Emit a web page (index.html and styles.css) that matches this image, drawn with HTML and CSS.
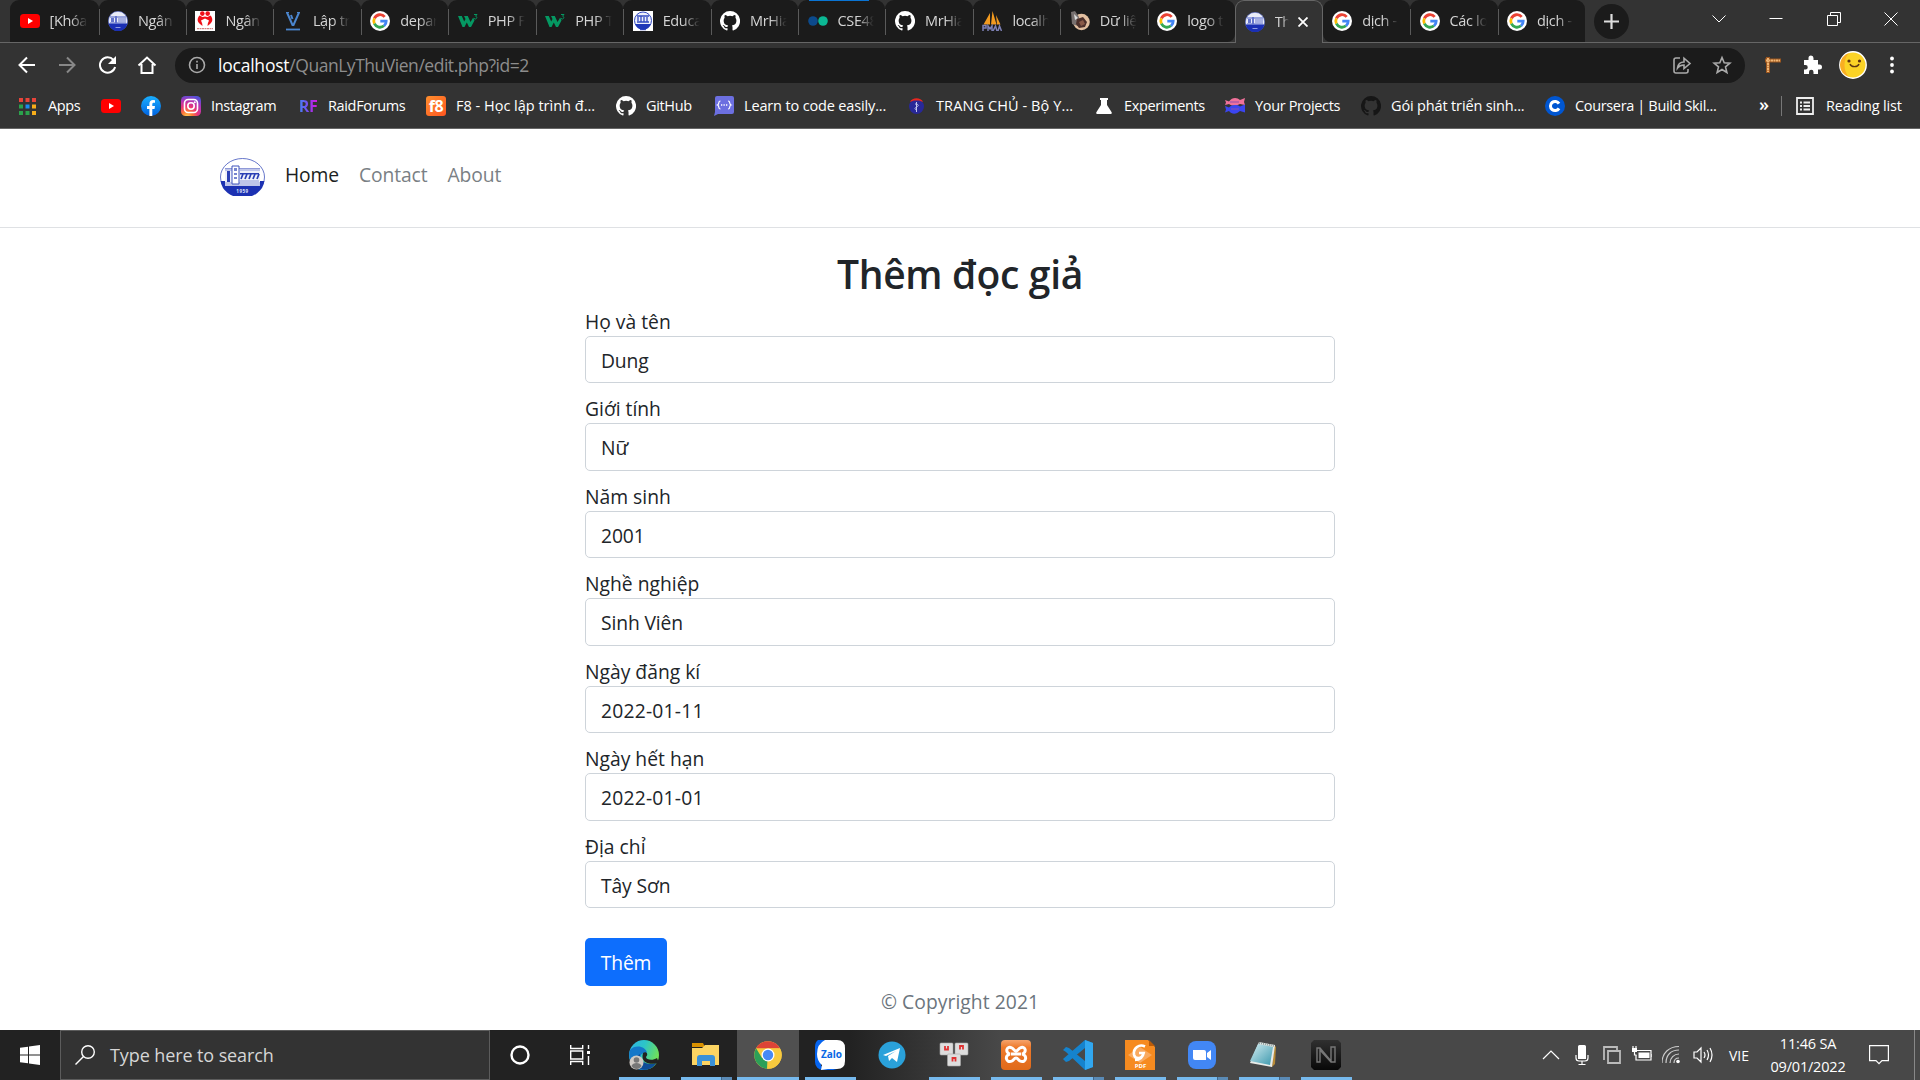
FILE: index.html
```html
<!DOCTYPE html>
<html lang="vi">
<head>
<meta charset="utf-8">
<title>Thêm đọc giả</title>
<link rel="stylesheet" href="styles.css">
</head>
<body>
<svg class="sprite" aria-hidden="true">
  <defs>
    <linearGradient id="fbG" x1="0" y1="0" x2="0" y2="1"><stop offset="0" stop-color="#19afff"/><stop offset="1" stop-color="#0062e0"/></linearGradient>
    <radialGradient id="igG" cx=".3" cy="1.05" r="1.1"><stop offset="0" stop-color="#ffd65a"/><stop offset=".25" stop-color="#fd7a35"/><stop offset=".5" stop-color="#e8357a"/><stop offset=".75" stop-color="#b535b5"/><stop offset="1" stop-color="#5551d8"/></radialGradient>
    <linearGradient id="edgeG" x1="0" y1="0" x2="1" y2=".4"><stop offset="0" stop-color="#2fb2e6"/><stop offset=".5" stop-color="#2cc5c8"/><stop offset="1" stop-color="#6fe05a"/></linearGradient>
    <linearGradient id="npG" x1="0" y1="0" x2="1" y2="1"><stop offset="0" stop-color="#d4eef2"/><stop offset="1" stop-color="#3c98ad"/></linearGradient>
    <linearGradient id="xpG" x1="0" y1="0" x2="0" y2="1"><stop offset="0" stop-color="#f6a46c"/><stop offset=".25" stop-color="#ee7a2b"/><stop offset="1" stop-color="#e06a1a"/></linearGradient>
    <linearGradient id="nG" x1="0" y1="0" x2="0" y2="1"><stop offset="0" stop-color="#303030"/><stop offset="1" stop-color="#080808"/></linearGradient>
  </defs>
  <symbol id="youtube" viewBox="0 0 20 20"><rect y="3" width="20" height="14" rx="3.5" fill="#f00"/><path d="M8 7v6l5-3z" fill="#fff"/></symbol>
  <symbol id="tlu" viewBox="0 0 20 20"><circle cx="10" cy="10" r="9.700" fill="#e9ecf8" stroke="#4b5fc4" stroke-width=".6"/><path d="M.5 12.500h19A9.700 9.700 0 0 1 .5 12.500z" fill="#1a2fb4"/><path d="M2 6h16M2 12h16" stroke="#4b5fc4"/><path d="M3 7h3v4H3zM7 5h2v7H7z" fill="#6474cc"/><path d="M10 8h8M10 10h8" stroke="#6474cc"/><path d="M7.500 16.500h5" stroke="#8f9ae0"/></symbol>
  <symbol id="tlusq" viewBox="0 0 20 20"><path fill="#fff" d="M0 0h20v20H0z"/><circle cx="10" cy="9.500" r="8.500" fill="#eef0fb" stroke="#3048c0"/><path d="M2 13h16a8.500 8.500 0 0 1-16 0z" fill="#2038b8"/><path d="M4 5h12M4 11h12M5 6v4M8 5v6M11 6v5M14 6v5" stroke="#3048c0" stroke-width="1.300"/><path d="M7 18.700h6" stroke="#2038b8"/></symbol>
  <symbol id="blood" viewBox="0 0 20 20"><path fill="#fff" d="M0 0h20v20H0z"/><path d="M4.500 4.500L7.500 6 10 5.500l2.500.5 3-1.500c2.500 3 2.500 6-.5 8.500l-2.500 2 .3-2.500L14 9.500l-4-2-4 2 1.200 3 .3 2.500L5 13C2 10.500 2 7.500 4.500 4.500z" fill="#f00f17"/><circle cx="7.300" cy="2.600" r="2.300" fill="#f00f17"/><circle cx="12.700" cy="2.600" r="2.300" fill="#f00f17"/><path d="M2 17.700h16" stroke="#c66" stroke-dasharray="2 .5"/></symbol>
  <symbol id="vlogo" viewBox="0 0 20 20"><path d="M4 1.500L9.500 14h1L16 1.500M8 4l1.500 4" fill="none" stroke="#4b86cf" stroke-width="2"/><path d="M3 18.500h14" stroke="#4b86cf" stroke-width="1.800"/><path d="M3 1.500h3M14 1.500h3" stroke="#4b86cf"/></symbol>
  <symbol id="google" viewBox="0 0 20 20"><circle cx="10" cy="10" r="10" fill="#fff"/><g fill="none" stroke-width="2.800"><path d="M14.700 5.800A6.200 6.200 0 0 0 4.400 7.300" stroke="#ea4335"/><path d="M4.400 7.300a6.200 6.200 0 0 0 0 5.400" stroke="#fbbc05"/><path d="M4.400 12.700a6.200 6.200 0 0 0 9.600 2.100" stroke="#34a853"/><path d="M14 14.800c1.600-1.300 2.300-2.800 2.200-4.600H10.300" stroke="#4285f4"/></g></symbol>
  <symbol id="w3" viewBox="0 0 20 20"><path d="M0 5h3.800l2.400 5.500L7.500 8 6 5h3.800l2.700 6 2.700-4.500 1.300 3L13 16h-2L8.800 11.500 6.500 16h-2z" fill="#059862"/><path d="M16 3.500h3l-1.500 1.700c2 .2 1.500 2.800-.2 2.800l-1.300-.5" stroke="#059862" fill="none"/></symbol>
  <symbol id="github" viewBox="0 0 16 16"><path d="M8 0a8 8 0 0 0-2.530 15.590c.4.070.55-.17.55-.38v-1.490c-2.010.37-2.530-.49-2.690-.94-.09-.23-.48-.94-.82-1.130-.28-.15-.68-.52-.01-.53.63-.01 1.080.58 1.230.82.72 1.210 1.870.87 2.330.66.070-.52.280-.87.510-1.070-1.780-.2-3.640-.89-3.640-3.950 0-.87.310-1.590.82-2.150-.08-.2-.36-1.020.08-2.120 0 0 .67-.21 2.200.82a7.600 7.600 0 0 1 4 0c1.530-1.040 2.200-.82 2.200-.82.44 1.100.16 1.920.08 2.120.51.56.82 1.270.82 2.150 0 3.070-1.870 3.750-3.650 3.950.29.25.54.73.54 1.480v2.200c0 .21.15.46.55.38A8 8 0 0 0 8 0z" fill="currentColor"/></symbol>
  <symbol id="dots" viewBox="0 0 20 20"><circle cx="5" cy="10" r="4.800" fill="#0c4a8c"/><circle cx="15" cy="10" r="4.800" fill="#0bb894"/></symbol>
  <symbol id="pma" viewBox="0 0 20 20"><path d="M1.500 13.500L8 2v11.500zM9 13.500L10.500 0l4 13.500zM15 13.500L14 4l4.500 9.500z" fill="#f29a1f"/><path d="M1 20v-5.500h3V17H1M6 20v-5l2 3 2-3v5M11 20l2.500-5 1.500 5M16 20l1.500-5 2 5" fill="none" stroke="#7d80b5" stroke-width="1.500"/></symbol>
  <symbol id="photo" viewBox="0 0 20 20"><circle cx="11.500" cy="11" r="8.300" fill="#e2bfa0"/><path d="M1 1l4-1 4 6-1 9-6-2z" fill="#77706f"/><path d="M4 3l4 4-3 2z" fill="#ddd"/><path d="M7 8l6-2 4 5-2 5-6 1-3-4z" fill="#4c302b"/><path d="M9 11l4-2 2 4-4 2z" fill="#8a5a48"/></symbol>
  <symbol id="facebook" viewBox="0 0 20 20"><circle cx="10" cy="10" r="10" fill="url(#fbG)"/><path d="M8.400 20v-7H6v-3h2.400V7.800c0-2.500 1.400-3.800 3.600-3.800l2 .2v2.500h-1.200c-1.200 0-1.500.7-1.500 1.500V10H14l-.5 3h-2.200v7z" fill="#fff"/></symbol>
  <symbol id="instagram" viewBox="0 0 20 20"><rect width="20" height="20" rx="4.500" fill="url(#igG)"/><g fill="none" stroke="#fff" stroke-width="1.600"><rect x="3.500" y="3.500" width="13" height="13" rx="3.700"/><circle cx="10" cy="10" r="3.200"/></g><circle cx="13.800" cy="6.200" r="1" fill="#fff"/></symbol>
  <symbol id="learn" viewBox="0 0 20 20"><path d="M3 0h15a2 2 0 0 1 2 2v14a2 2 0 0 1-2 2H4l-4 2 1-4V2a2 2 0 0 1 2-2z" fill="#6c6fe0"/><path d="M6.500 5C3.500 5 6 8 3.500 9 6 10 3.500 13 6.500 13M14 5c3 0 .5 3 3 4-2.500 1 0 4-3 4" fill="none" stroke="#fff" stroke-width="1.200"/><path d="M7 9h1.300m1.200 0h1.300m1.200 0h1.300" stroke="#fff" stroke-width="1.300"/></symbol>
  <symbol id="health" viewBox="0 0 20 20"><circle cx="8.500" cy="10.500" r="7.500" fill="#282898"/><path d="M2 6c2-5 11-5 13 0l-4-1.500H6z" fill="#e82720"/><path d="M8.500 6v10M7 8c4 0 4 2 1.500 3S7 14 9 14" stroke="#c2c5ee" fill="none"/></symbol>
  <symbol id="flask" viewBox="0 0 20 20"><path d="M4 2h8v2h-1v5l4.500 7c.7 1.300 0 2-1 2h-13c-1 0-1.700-.7-1-2L5 9V4H4z" fill="#fff"/></symbol>
  <symbol id="fish" viewBox="0 0 20 20"><path d="M0 4l4 1.500C7 1 12 1 15 4l5-2-1 4 1 3-5-1c-4 2-8 2-11 0L0 9l1-2.500z" fill="#f0719a"/><path d="M0 10l4 1.500C7 8.500 12 8.500 15 10.500l5-2v8L15 15c-3 3-8 4-11 0l-4 1.500 1-3z" fill="#3b45f0"/><path d="M5 6h9M6 13h8" stroke="#8f4fae" stroke-width="1.200"/></symbol>
  <symbol id="coursera" viewBox="0 0 20 20"><circle cx="10" cy="10" r="10" fill="#0056d2"/><path d="M14 7.600a4.600 4.600 0 1 0 0 4.800" fill="none" stroke="#fff" stroke-width="3"/></symbol>
  <symbol id="apps" viewBox="0 0 17 17"><path fill="#e8443a" d="M0 0h4v4H0zM6.500 0h4v4h-4zM13 0h4v4h-4z"/><path fill="#2ba24c" d="M0 6.500h4v4H0zM0 13h4v4H0zM6.500 13h4v4h-4z"/><path fill="#1a8cf0" d="M6.500 6.500h4v4h-4z"/><path fill="#f7ad1a" d="M13 6.500h4v4h-4zM13 13h4v4h-4z"/></symbol>
</svg>

<header class="browser">
  <div class="tabstrip">
    <div class="tab first"><svg class="fav"><use href="#youtube"/></svg><span>[Khóa</span></div>
    <div class="tab"><svg class="fav"><use href="#tlu"/></svg><span>Ngân</span></div>
    <div class="tab"><svg class="fav"><use href="#blood"/></svg><span>Ngân</span></div>
    <div class="tab"><svg class="fav"><use href="#vlogo"/></svg><span>Lập trì</span></div>
    <div class="tab"><svg class="fav"><use href="#google"/></svg><span>depar</span></div>
    <div class="tab"><svg class="fav"><use href="#w3"/></svg><span>PHP F</span></div>
    <div class="tab"><svg class="fav"><use href="#w3"/></svg><span>PHP T</span></div>
    <div class="tab"><svg class="fav"><use href="#tlusq"/></svg><span>Educa</span></div>
    <div class="tab"><svg class="fav"><use href="#github"/></svg><span>MrHia</span></div>
    <div class="tab loading"><svg class="fav"><use href="#dots"/></svg><span>CSE48</span></div>
    <div class="tab"><svg class="fav"><use href="#github"/></svg><span>MrHia</span></div>
    <div class="tab"><svg class="fav"><use href="#pma"/></svg><span>localh</span></div>
    <div class="tab"><svg class="fav"><use href="#photo"/></svg><span>Dữ liệ</span></div>
    <div class="tab before-active"><svg class="fav"><use href="#google"/></svg><span>logo t</span></div>
    <div class="tab active"><svg class="fav"><use href="#tlu"/></svg><span>Th</span><svg class="close" viewBox="0 0 10 10"><path d="M.5.5l9 9M9.500.5l-9 9"/></svg></div>
    <div class="tab after-active"><svg class="fav"><use href="#google"/></svg><span>dịch -</span></div>
    <div class="tab"><svg class="fav"><use href="#google"/></svg><span>Các lo</span></div>
    <div class="tab last"><svg class="fav"><use href="#google"/></svg><span>dịch -</span></div>
    <div class="newtab"><svg viewBox="0 0 15 15"><path d="M7.500 0v15M0 7.500h15"/></svg></div>
    <div class="winbtns">
      <svg viewBox="0 0 14 14"><path d="M.5 3.500L7 10l6.500-6.500"/></svg>
      <svg viewBox="0 0 14 14"><path d="M.5 6.500h13"/></svg>
      <svg viewBox="0 0 14 14"><path d="M.5 3.500h10v10H.5zM3.500 3V.5h10v10H11"/></svg>
      <svg viewBox="0 0 14 14"><path d="M.5.5l13 13M13.500.5l-13 13"/></svg>
    </div>
  </div>

  <div class="toolbar">
    <div class="navicons">
      <svg viewBox="0 0 20 20"><path d="M18 10H3M10 2.500L2.500 10l7.500 7.500"/></svg>
      <svg class="dim" viewBox="0 0 20 20"><path d="M2 10h15M10 2.500l7.500 7.500-7.500 7.500"/></svg>
      <svg viewBox="0 0 20 20"><path d="M16.500 5a7.700 7.700 0 1 0 1.600 7"/><path class="solid" d="M19 1v8h-8z"/></svg>
      <svg viewBox="0 0 20 20"><path d="M1.500 10.500L10 2.500l8.500 8M4.500 9v9h11V9"/></svg>
    </div>
    <div class="omnibox">
      <svg class="info" viewBox="0 0 18 18"><circle cx="9" cy="9" r="7.500"/><path d="M9 8v5M9 4.800v1.700"/></svg>
      <span class="url"><b>localhost</b>/QuanLyThuVien/edit.php?id=2</span>
      <svg class="share" viewBox="0 0 20 20"><path d="M8 3H4a2 2 0 0 0-2 2v11a2 2 0 0 0 2 2h10a2 2 0 0 0 2-2v-2"/><path d="M5.500 13c.5-4 3-6 6.500-6V3.200L18 8.500 12 13.500V10c-3 0-5 1-6.500 3z"/></svg>
      <svg class="star" viewBox="0 0 20 20"><path d="M10 2.500l2.200 5.300 5.700.4-4.400 3.700 1.400 5.600-4.900-3-4.900 3 1.400-5.600-4.400-3.700 5.700-.4z"/></svg>
    </div>
    <div class="exts">
      <svg viewBox="0 0 18 18"><path d="M4 1v16M1 4.500h16" stroke="#9c561e" stroke-width="4"/><path d="M4 2v14M2 4.500h14" stroke="#f0b574" stroke-width="2" stroke-dasharray="2 .5"/></svg>
      <svg viewBox="0 0 20 20"><path d="M2 5h4.500V3a2.500 2.500 0 0 1 5 0v2H16v4.500h1.500a2.500 2.500 0 0 1 0 5H16V19h-4.500v-2a2 2 0 0 0-4.500 0v2H2v-4.500h1.500a2.200 2.200 0 0 0 0-4.500H2z" fill="#fff"/></svg>
      <svg class="avatar" viewBox="0 0 28 28"><circle cx="14" cy="14" r="13.200" fill="#fbd326" stroke="#fff" stroke-width="1.400"/><path d="M10 2a12.500 12.500 0 0 0 0 24C4 20 4 8 10 2z" fill="#f9ae22"/><path d="M11 13c1 3.500 8 3.500 9 0" fill="none" stroke="#5b3511" stroke-width="1.400"/><circle cx="10" cy="10" r="1.600" fill="#5b2f10"/><circle cx="20.500" cy="10" r="1.600" fill="#5b2f10"/></svg>
      <svg class="menu" viewBox="0 0 4 18"><circle cx="2" cy="2.500" r="1.900"/><circle cx="2" cy="9" r="1.900"/><circle cx="2" cy="15.500" r="1.900"/></svg>
    </div>
  </div>

  <nav class="bookmarks">
    <a class="apps"><svg><use href="#apps"/></svg>Apps</a>
    <a><svg><use href="#youtube"/></svg></a>
    <a><svg><use href="#facebook"/></svg></a>
    <a><svg><use href="#instagram"/></svg>Instagram</a>
    <a><i class="rf">RF</i>RaidForums</a>
    <a class="wide"><i class="f8">f8</i>F8 - Học lập trình đ...</a>
    <a><svg><use href="#github"/></svg>GitHub</a>
    <a class="medium"><svg><use href="#learn"/></svg>Learn to code easily...</a>
    <a class="caps"><svg><use href="#health"/></svg>TRANG CHỦ - Bộ Y...</a>
    <a class="lab"><svg><use href="#flask"/></svg>Experiments</a>
    <a><svg><use href="#fish"/></svg>Your Projects</a>
    <a class="medium"><svg class="dark"><use href="#github"/></svg>Gói phát triển sinh...</a>
    <a><svg><use href="#coursera"/></svg>Coursera | Build Skil...</a>
    <a class="more">»</a>
    <a class="reading medium"><svg viewBox="0 0 18 18"><path d="M1 1h16v16H1zM4 5.500h2M4 9h2M4 12.500h2M7.500 5.500H14M7.500 9H14M7.500 12.500H14" fill="none" stroke="#eee" stroke-width="1.800"/></svg>Reading list</a>
  </nav>
</header>

<main class="page">
  <nav class="navbar">
    <svg class="logo" viewBox="0 0 45 38"><ellipse cx="22.500" cy="19" rx="22" ry="18.500" fill="#fff" stroke="#4054bd" stroke-width=".8"/><path d="M.6 23h43.800A22 18.500 0 0 1 .6 23z" fill="#1c31b2"/><path d="M5 10h35v18H5z" fill="#eef0fa"/><path d="M5 10.500h35M5 12h8M20 12h20M5 25h35M5 27h35M20 23h19" stroke="#7784cf" stroke-width=".8"/><path d="M7 13h3v11H7z" fill="#2b3fb5"/><path d="M12 8h7v18h-7z" fill="#fff" stroke="#4054bd"/><path d="M14 10h3v3h-3zM14 15h3v2h-3zM14 19h3v2h-3z" fill="#7784cf"/><path d="M20 15h19v1.500H20z" fill="#2b3fb5"/><path d="M23 16l-2 5M27 16l-2 5M31 16l-2 5M35 16l-2 5M39 16l-2 5" stroke="#2b3fb5" stroke-width="1.700"/><text x="22.500" y="35" text-anchor="middle">1959</text></svg>
    <a class="current">Home</a><a>Contact</a><a>About</a>
  </nav>
  <form class="form">
    <h2>Thêm đọc giả</h2>
    <div class="group"><label>Họ và tên</label><div class="control">Dung</div></div>
    <div class="group"><label>Giới tính</label><div class="control">Nữ</div></div>
    <div class="group"><label>Năm sinh</label><div class="control">2001</div></div>
    <div class="group"><label>Nghề nghiệp</label><div class="control">Sinh Viên</div></div>
    <div class="group"><label>Ngày đăng kí</label><div class="control date">2022-01-11</div></div>
    <div class="group"><label>Ngày hết hạn</label><div class="control date">2022-01-01</div></div>
    <div class="group"><label>Địa chỉ</label><div class="control">Tây Sơn</div></div>
    <button type="button" class="btn">Thêm</button>
  </form>
  <p class="copyright">© Copyright 2021</p>
</main>

<footer class="taskbar">
  <div class="start"><svg viewBox="0 0 20 20"><path d="M0 2.800l8-1.100v7.800H0zM9 1.500L20 0v9.500H9zM0 10.500h8v7.800l-8-1.100zM9 10.500h11V20L9 18.500z" fill="#fff"/></svg></div>
  <div class="search"><svg viewBox="0 0 20 20"><circle cx="13" cy="7" r="6.300"/><path d="M8.500 11.500L.5 19.500"/></svg><span>Type here to search</span></div>
  <div class="cortana"><svg viewBox="0 0 20 20"><circle cx="10" cy="10" r="8.500"/></svg></div>
  <div class="taskview"><svg viewBox="0 0 20 20"><path d="M.7 0v3.500h12V0M.7 20v-3.500h12V20M.7 6h12v8H.7zM18.500 0v4M18.500 11v9"/><path d="M17 6h3v3h-3z" fill="#fff" stroke="none"/></svg></div>
  <div class="dock">
    <div class="app"><svg viewBox="0 0 30 30"><circle cx="15" cy="15" r="15" fill="url(#edgeG)"/><path d="M1 10c5-6 16-4 17 3-5-1-8 3-6 7s8 6 15 3c-4 7-14 9-20 5S-1 16 1 10z" fill="#1477c9"/><path d="M11 14c-1 7 7 12 16 9-4 7-13 9-18 4-4-4-2-11 2-13z" fill="#0e4d97"/><path d="M14 13c3-2 6 1 3 4 0 3 7 4 11 1l2 5c-8 2-19 1-16-10z" fill="#222"/><circle cx="7.500" cy="22.500" r="7" fill="#cfcac5"/><circle cx="7.500" cy="20" r="2.800" fill="#777"/><path d="M2.500 26c1-4 9-4 10 0-2 4-8 4-10 0z" fill="#777"/></svg></div>
    <div class="app multi"><svg viewBox="0 0 30 30"><path d="M1 3h11l2 4H1z" fill="#d99100"/><path d="M1 8h10l3-3h14v20H1z" fill="#fcd462"/><path d="M6 26v-8q0-3 3-3h12q3 0 3 3v8h-5v-5h-8v5z" fill="#3a91d8"/></svg></div>
    <div class="app focus"><svg viewBox="0 0 30 30"><circle cx="15" cy="15" r="13.700" fill="#f8ca3e"/><path d="M3.100 8.200a13.700 13.700 0 0 1 23.800 0H15z" fill="#dc4437"/><path d="M3.100 8.200a13.700 13.700 0 0 0 11 20.500l5.900-10.200L9 18z" fill="#2c9f58"/><path d="M15 8.500h12a13.700 13.700 0 0 1-13 20.200z" fill="#f8ca3e"/><circle cx="15" cy="15" r="6.500" fill="#fff"/><circle cx="15" cy="15" r="5.200" fill="#4789f4"/></svg></div>
    <div class="app"><svg viewBox="0 0 30 30"><path d="M3 0h7L6 26l16 4H8a8 8 0 0 1-8-8V7q0-5 3-7z" fill="#0664ee"/><path d="M10 0h12q8 0 8 8v13q0 8-8 8h-9l-7 1 1-5q-5-4-5-11Q2 4 10 0z" fill="#fff"/><text class="zalo" x="16.500" y="17.500" text-anchor="middle">Zalo</text></svg></div>
    <div class="app plain"><svg viewBox="0 0 30 30"><circle cx="15" cy="15" r="13.500" fill="#2aa1da"/><path d="M6 15L23 8l-3 14-5-4-3 3-1-5 8-5-10 5z" fill="#fff"/></svg></div>
    <div class="app"><svg viewBox="0 0 30 30"><g fill="#ddd" stroke="#aaa" stroke-width=".6"><rect x="1" y="3" width="13" height="12" rx="1"/><rect x="16" y="3" width="13" height="12" rx="1"/><rect x="8.500" y="14" width="13" height="12" rx="1"/></g><path d="M6 6v3.500h3V6M21 9.500V6h3v3.500M13.500 21.500V18h3v3.500" fill="none" stroke="#df3232" stroke-width="1.800"/></svg></div>
    <div class="app"><svg viewBox="0 0 30 30"><rect width="30" height="30" rx="4" fill="url(#xpG)"/><path d="M11 8c-6-3-7 5-2 6-6 1-4 10 2 7 2-1 2-3 4-3s2 2 4 3c6 3 8-6 2-7 5-1 4-9-2-6-2 1-2 3-4 3s-2-2-4-3zM10 14h10" fill="none" stroke="#fff" stroke-width="3"/></svg></div>
    <div class="app multi"><svg viewBox="0 0 30 30"><path d="M22 0l8 3v24l-8 3L3 12l-3-2 3-3 3 1 16 13V8L6 21l-3 1-3-3z" fill="#1583cd"/><path d="M22 0l8 3v24l-8 3z" fill="#31a7ef"/></svg></div>
    <div class="app"><svg viewBox="0 0 30 30"><path d="M0 0h23l7 7v23H0z" fill="#f68b20"/><path d="M24 0l6 6h-6z" fill="#bc5c08"/><path d="M15 7l12 8-12 8L3 15z" fill="#f9aa60"/><path d="M20 6.500c-6-3-12 2-11 8 1 5 8 5 9.500-1.500H14M19 12c-1 5-4 8-9 8" fill="none" stroke="#fff" stroke-width="2.600"/><text class="pdf" x="15.500" y="28" text-anchor="middle">PDF</text></svg></div>
    <div class="app multi"><svg viewBox="0 0 30 30"><rect x="1" y="1" width="28" height="28" rx="8" fill="#4287f5"/><path d="M6 10h11q2 0 2 2v8H8q-2 0-2-2zM20 13l4-3v10l-4-3z" fill="#fff"/></svg></div>
    <div class="app multi"><svg viewBox="0 0 30 30"><path d="M25 5l2 2-1 17-3 3z" fill="#b88a36"/><path d="M10 2l16 3-3 22-22-4z" fill="#e8ebe8"/><path d="M9 4l15 3-3 18-20-4z" fill="url(#npG)"/><path d="M10 3l15 3" stroke="#899" stroke-width="2" stroke-dasharray="1 1"/></svg></div>
    <div class="app"><svg viewBox="0 0 30 30"><path d="M3 0h24l3 3v24l-3 3H3l-3-3V3z" fill="url(#nG)"/><path d="M6 22V8h3l11 13V7h4v15h-4L9 10v12z" fill="none" stroke="#777" stroke-width="1.400"/></svg></div>
  </div>
  <div class="tray">
    <svg viewBox="0 0 20 20"><path d="M2 14l8-8 8 8"/></svg>
    <svg viewBox="0 0 20 20"><path d="M6 1.500a1.500 1.500 0 0 1 1.500-1.500h5A1.500 1.500 0 0 1 14 1.500V14H6z" fill="#fff" stroke="none"/><path d="M4 10v3q0 3 3 3h6q3 0 3-3v-3M10 16v3.500M6.500 19.500h7"/></svg>
    <svg viewBox="0 0 20 20"><path d="M2 15V2h13v3M6 6h12v12H6z" stroke="#bbb" stroke-width="1.800"/></svg>
    <svg viewBox="0 0 20 20"><path d="M5 5.500h14v9.500H4v-5"/><path d="M6.500 7.500h11V13h-11zM0 3h5v4H0z" fill="#fff" stroke="none"/><path d="M1 1v3M4 1v3M2.500 7v3h2M20 9v3"/></svg>
    <svg viewBox="0 0 20 20"><path d="M4 18C4 10 9 5 17 5M8 18c0-5 4-9 9-9M12 18c0-3 2-5 5-5M0 18C0 8 7 1.500 17 1.500" stroke="#ccc"/><circle cx="16" cy="16.500" r="1.800" fill="#fff" stroke="none"/></svg>
    <svg viewBox="0 0 20 20"><path d="M1 7h3l4-4v14l-4-4H1zM11 7q2 3 0 6M14 5q3 5 0 10M17 3q4 7 0 14"/></svg>
    <span class="lang">VIE</span>
    <div class="clock"><span>11:46 SA</span><span>09/01/2022</span></div>
    <svg class="note" viewBox="0 0 20 20"><path d="M.6.7h18.800v15H13l-3 3-3-3H.6z"/></svg>
    <i class="peek"></i>
  </div>
</footer>
</body>
</html>
```
FILE: styles.css
```css
* { box-sizing: border-box; }
body {
  margin: 0;
  width: 1920px;
  height: 1080px;
  overflow: hidden;
  display: grid;
  grid-template-rows: 129px 901px 50px;
  font-family: "Open Sans", "Noto Sans", sans-serif;
  background: #fff;
}
svg { display: block; flex: none; }
.sprite { position: absolute; width: 0; height: 0; }

/* browser chrome */
.browser {
  display: grid;
  grid-template-rows: 43px 43px 43px;
  background: #333;
  border-bottom: 1px solid #666;
  color: #fff;
  font-size: 14.500px;
  letter-spacing: -0.350px;
}
.tabstrip { display: flex; padding-left: 10px; background: linear-gradient(#666, #666) 0 42px / 100% 1px no-repeat; }
.tab {
  position: relative;
  width: 87.440px;
  height: 42px;
  flex: none;
  display: flex;
  align-items: center;
  padding: 0 8px 1px 9.500px;
  gap: 10px;
  background: #1b1b1b;
  border-radius: 9px 9px 0 0;
  color: #d5d5d5;
}
.tab.first { width: 88.500px; }
.tab:not(.first):not(.active):not(.after-active)::before {
  content: "";
  position: absolute;
  left: 0;
  top: 9px;
  width: 1px;
  height: 26px;
  background: #5a5a5a;
}
.tab span {
  flex: 1;
  min-width: 0;
  overflow: hidden;
  white-space: nowrap;
  -webkit-mask-image: linear-gradient(90deg, #000 50%, transparent 92%);
  mask-image: linear-gradient(90deg, #000 50%, transparent 92%);
}
.tab.active {
  height: 43px;
  background: #333;
  border: 1px solid #666;
  border-bottom: 0;
  padding: 0 13.500px 1px 8.500px;
}
.tab.active .close { width: 10px; height: 10px; margin-left: -2px; stroke: #fff; stroke-width: 1.800; }
.before-active { border-bottom-right-radius: 8px; }
.after-active { border-bottom-left-radius: 8px; }
.loading::after { content: ""; position: absolute; top: 0; left: 11px; width: 60px; height: 1px; background: #0a74d4; }
.fav { width: 20px; height: 20px; color: #fff; }
.newtab {
  width: 35px;
  height: 35px;
  margin: 4px 0 0 9px;
  border-radius: 50%;
  background: #1b1b1b;
  display: grid;
  place-items: center;
}
.newtab svg { width: 15px; stroke: #ddd; stroke-width: 2.200; }
.winbtns { display: flex; gap: 43.300px; margin: 12px 22px 0 auto; }
.winbtns svg { width: 14px; height: 14px; fill: none; stroke: #fff; stroke-width: 1; }

.toolbar { display: flex; align-items: center; padding: 1px 21px 0 17px; }
.navicons { display: flex; gap: 20px; width: 158px; }
.navicons svg { width: 20px; height: 20px; fill: none; stroke: #fff; stroke-width: 2; }
.navicons .dim { stroke: #888; }
.navicons .solid { fill: #fff; stroke: none; }
.omnibox {
  width: 1570px;
  height: 35px;
  border-radius: 18px;
  background: #1b1b1b;
  display: flex;
  align-items: center;
  padding: 0 13px;
  font-size: 17.500px;
}
.omnibox svg { fill: none; stroke: #aaa; stroke-width: 1.600; }
.info { width: 18px; height: 18px; }
.url { margin: 0 auto 0 12px; color: #8d8d8d; letter-spacing: -0.470px; }
.url b { font-weight: 400; color: #fff; letter-spacing: -0.220px; }
.share, .star { width: 20px; height: 20px; }
.share { margin-right: 20px; }
.exts { display: flex; align-items: center; flex: 1; padding-left: 19px; }
.exts svg { width: 18px; height: 18px; margin-right: 20px; fill: none; }
.exts svg:nth-child(2) { width: 20px; height: 20px; margin-right: 17px; }
.exts .avatar { width: 28px; height: 28px; margin-right: 23px; }
.exts .menu { width: 4px; margin: 0; fill: #fff; }

.bookmarks {
  display: grid;
  grid-template-columns: 82px 40px 40px 117px 128px 190px 98px 194px 188px 129px 136px 184px 214px 22px 1fr;
  align-items: center;
  padding: 0 0 3px 19px;
}
.bookmarks a { display: flex; align-items: center; gap: 10px; white-space: nowrap; line-height: 20px; }
.bookmarks svg { width: 20px; height: 20px; color: #fff; }
.bookmarks .dark { color: #161616; }
.bookmarks .wide { letter-spacing: 0; }
.bookmarks .medium { letter-spacing: -0.150px; }
.bookmarks .caps { letter-spacing: .1px; }
.bookmarks .apps { gap: 12px; }
.bookmarks .apps svg { width: 17px; height: 17px; }
.bookmarks .caps, .bookmarks .lab { gap: 8px; }
.bookmarks i { width: 20px; height: 20px; flex: none; font: 700 16px/20px "Open Sans", sans-serif; letter-spacing: -0.500px; text-align: center; }
.bookmarks .rf { background: linear-gradient(90deg, #3c8cf5, #7a4bf0, #e60be0); -webkit-background-clip: text; background-clip: text; color: transparent; }
.bookmarks .f8 { border-radius: 3px; background: linear-gradient(135deg, #ff8f2e, #ff5520); color: #fff; }
.bookmarks .more { font-size: 18px; font-weight: 600; line-height: 16px; padding-bottom: 4px; }
.bookmarks .reading { border-left: 1px solid #777; padding-left: 14px; gap: 12px; height: 20px; }
.bookmarks .reading svg { width: 18px; height: 18px; }

/* web page */
.page { font-size: 19.300px; line-height: 30px; letter-spacing: -0.120px; color: #212529; }
.navbar { height: 99px; border-bottom: 1px solid #dfe1e4; display: flex; align-items: flex-start; padding: 29px 0 0 220px; color: #7a7f84; }
.logo { width: 45px; height: 38px; margin-right: 20px; }
.logo text { font: 700 4.500px "Open Sans", sans-serif; fill: #dfe3fa; letter-spacing: .5px; }
.navbar a { margin: 2px 20px 0 0; line-height: 30px; }
.navbar .current { color: #1c1f22; }
.form { width: 750px; margin: 19.500px auto 0; }
.form h2 { margin: 0 0 10px; padding-top: 2px; height: 48px; font-size: 39px; line-height: 48px; font-weight: 600; text-align: center; letter-spacing: -0.300px; }
.group { height: 87.500px; }
.group label { display: block; height: 30px; line-height: 32px; letter-spacing: 0; }
.control { height: 47.500px; border: 1px solid #ced4da; border-radius: 5px; padding: 0 15px; line-height: 48px; }
.control.date { letter-spacing: .2px; }
.btn {
  display: block;
  width: 82px;
  height: 48px;
  margin-top: 20px;
  padding: 2px 0 0;
  border: 0;
  border-radius: 5px;
  background: #0d6efd;
  color: #fff;
  font: inherit;
  letter-spacing: inherit;
}
.copyright { margin: 1px 0 0; text-align: center; color: #6c757d; letter-spacing: .05px; }

/* taskbar */
.taskbar { display: flex; background: linear-gradient(90deg, #222 0, #222 850px, #484848 1000px, #484848); color: #fff; }
.start { width: 60px; display: grid; place-items: center; }
.start svg { width: 20px; height: 20px; }
.search { width: 430px; background: #333; border: 1px solid #5c5c5c; display: flex; align-items: center; padding-left: 14px; gap: 15px; font-size: 18px; color: #d6d6d6; letter-spacing: -0.100px; }
.search svg, .cortana svg, .taskview svg { width: 20px; height: 20px; fill: none; stroke: #fff; stroke-width: 1.400; }
.cortana { width: 60px; display: grid; place-items: center; }
.cortana svg { stroke-width: 2.400; }
.taskview { width: 63px; display: grid; align-items: center; padding-left: 20px; }
.dock { display: flex; }
.app { width: 62px; display: grid; place-items: center; background: linear-gradient(#76b9ed, #76b9ed) 50% 100% / 51px 3px no-repeat; }
.app svg { width: 30px; height: 30px; }
.app.multi { background: linear-gradient(90deg, #76b9ed 40px, #40668a 40px, #40668a 41px, #5a8ab5 41px) 50% 100% / 51px 3px no-repeat; }
.app.focus { background: linear-gradient(#76b9ed, #76b9ed) 0 100% / 100% 3px no-repeat, #505050; }
.app.plain { background: none; }
.zalo { font: 700 10px "Open Sans", sans-serif; fill: #0968e5; }
.pdf { font: 700 6px "Open Sans", sans-serif; fill: #fff; }
.tray { margin-left: auto; display: flex; align-items: center; }
.tray svg { width: 20px; height: 20px; margin-right: 10.300px; fill: none; stroke: #fff; stroke-width: 1.200; }
.tray .lang { font-size: 14px; width: 35px; padding-left: 6px; letter-spacing: 0; }
.clock { width: 100px; display: grid; grid-template-rows: 23px 23px; text-align: center; font-size: 14.500px; line-height: 23px; letter-spacing: -0.200px; }
.tray .note { margin: 0 25px 0 11px; }
.peek { width: 1px; height: 50px; background: #888; margin-right: 5px; }
```
